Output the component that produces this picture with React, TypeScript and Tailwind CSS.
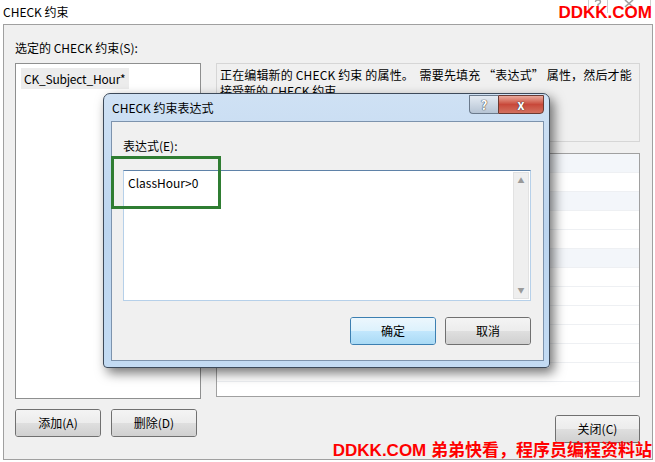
const font = "font-['Noto_Sans_CJK_SC','Noto_Sans',sans-serif]"

const rows = [true, false, true, false, false, true, false, false, false, false, false, false]

function WinButton({ label, focused, className }: { label: string; focused?: boolean; className?: string }) {
  return (
    <button
      className={`relative overflow-hidden rounded-[3px] border text-[12px] text-black ${
        focused ? 'border-[#3c7fb1]' : 'border-[#707070]'
      } ${className ?? ''}`}
    >
      <span className="absolute inset-0 flex flex-col">
        <span
          className={`flex-1 ${
            focused ? 'bg-gradient-to-b from-[#ecf7fd] to-[#dcf1fc]' : 'bg-gradient-to-b from-[#f4f4f4] to-[#ececec]'
          }`}
        />
        <span
          className={`flex-1 ${
            focused ? 'bg-gradient-to-b from-[#c2e7fd] to-[#a9daf5]' : 'bg-gradient-to-b from-[#dfdfdf] to-[#d0d0d0]'
          }`}
        />
      </span>
      <span className="relative">{label}</span>
    </button>
  )
}

export default function App() {
  return (
    <div className={`relative h-[462px] w-[655px] overflow-hidden bg-white text-black ${font}`}>
      {/* window title */}
      <div className="flex h-[24px] items-center pl-[3px] text-[12px] leading-none">CHECK 约束</div>

      {/* faint caption buttons behind watermark */}
      <div className="absolute right-[4px] top-[-6px] flex h-[19px]">
        <div className="flex w-[20px] items-center justify-center border-x border-[#cfcfcf]">
          <svg width="8" height="10" viewBox="0 0 8 10">
            <path d="M1.5 3 Q1.5 1 4 1 Q6.5 1 6.5 3 Q6.5 4.5 4 5.5 L4 7 M4 8.5 L4 9.5" stroke="#a0a0a0" strokeWidth="1.4" fill="none" />
          </svg>
        </div>
        <div className="flex w-[43px] items-center justify-center border-r border-[#cfcfcf]">
          <svg width="10" height="9" viewBox="0 0 10 9">
            <path d="M1 1 L9 8 M9 1 L1 8" stroke="#a0a0a0" strokeWidth="1.6" />
          </svg>
        </div>
      </div>
      <div className="absolute right-[3px] top-[3px] font-['Liberation_Sans','Noto_Sans_CJK_SC',sans-serif] text-[17px] font-bold leading-[20px] text-[#ff0000]">
        DDKK.COM
      </div>

      {/* main panel */}
      <div className="ml-[3px] h-[436px] w-[650px] border border-[#a0a0a0] bg-[#f0f0f0] pl-[11px] pr-[12px] pt-[15px]">
        <div className="h-[16px] text-[12px] leading-[16px]">选定的 CHECK 约束(S):</div>
        <div className="mt-[7px] flex gap-[15px]">
          <div className="flex w-[186px] flex-col">
            <div className="h-[336px] border border-[#8e8f8f] bg-white p-[1px]">
              <div className="ml-[4px] inline-block bg-[#ececec] px-[3px] text-[12px] leading-[21px] tracking-[-0.2px]">
                CK_Subject_Hour*
              </div>
            </div>
            <div className="mt-[10px] flex gap-[10px]">
              <WinButton label="添加(A)" className="h-[28px] w-[86px]" />
              <WinButton label="删除(D)" className="h-[28px] w-[86px]" />
            </div>
          </div>

          <div className="flex flex-1 flex-col">
            <div className="h-[79px] border border-[#d6d6d6] bg-[#f0f0f0] px-[3px] pt-[3px] text-[12px] leading-[16px]">
              <div className="whitespace-pre tracking-[0.15px]">正在编辑新的 CHECK 约束 的属性。  需要先填充 “表达式” 属性，然后才能</div>
              <div className="whitespace-nowrap">接受新的 CHECK 约束。</div>
            </div>
            <div className="mt-[11px] h-[244px] border border-[#a0a0a0] bg-white">
              {rows.map((s, i) => (
                <div
                  key={i}
                  className={`h-[19px] border-b border-[#eef0f3] ${s ? 'bg-[#f3f6fa]' : 'bg-white'}`}
                />
              ))}
            </div>
            <div className="mt-[18px] flex justify-end">
              <WinButton label="关闭(C)" className="h-[28px] w-[85px]" />
            </div>
          </div>
        </div>
      </div>

      {/* expression dialog */}
      <div className="absolute left-[103px] top-[93px] flex h-[275px] w-[447px] flex-col rounded-t-[7px] rounded-b-[4px] border border-[#3d4a5a] bg-gradient-to-b from-[#cfe1f4] via-[#bcd5ef] to-[#c3dbf3] pb-[6px] pl-[7px] pr-[5px] shadow-[4px_5px_12px_rgba(0,0,0,0.55)]">
        <div className="relative flex h-[27px] items-center pl-[1px] text-[12px]">
          CHECK 约束表达式
          <div className="absolute right-[0px] top-[1px] flex h-[19px]">
            <div className="flex w-[29px] items-center justify-center rounded-bl-[4px] border border-r-0 border-[#6b7a8c] bg-gradient-to-b from-[#e4ebf3] to-[#b6c4d4] text-[13px] font-bold leading-none text-white [text-shadow:0_0_1px_#333,0_0_1px_#333]">
              ?
            </div>
            <div className="flex w-[46px] items-center justify-center rounded-br-[4px] border border-[#6b3a32] bg-gradient-to-b from-[#e9a99c] via-[#c8483a] to-[#d2705f] text-[13px] font-bold leading-none text-white [text-shadow:0_0_1px_#333,0_0_1px_#333]">
              x
            </div>
          </div>
        </div>
        <div className="flex flex-1 flex-col border border-[#7d93ad] bg-[#f0f0f0] pl-[11px] pr-[12px] pt-[16px]">
          <div className="h-[16px] text-[12px] leading-[16px]">表达式(E):</div>
          <div className="mt-[16px] flex h-[131px] border border-[#b6d0e9] border-t-[#5f82a8] bg-white">
            <div className="flex-1 pl-[4px] pt-[3px] text-[12px] leading-[18px]">ClassHour&gt;0</div>
            <div className="m-[1px] flex w-[16px] flex-col items-center justify-between border border-[#e2e2e2] bg-[#efefef] py-[4px] text-[7px] leading-none text-[#9a9a9a]">
              <span>▲</span>
              <span>▼</span>
            </div>
          </div>
          <div className="mt-[16px] flex justify-end gap-[9px]">
            <WinButton label="确定" focused className="h-[28px] w-[86px]" />
            <WinButton label="取消" className="h-[28px] w-[86px]" />
          </div>
        </div>
      </div>

      {/* green highlight */}
      <div className="absolute left-[111px] top-[156px] h-[53px] w-[110px] border-[3px] border-[#2f7d32]" />

      {/* watermark */}
      <div className="absolute bottom-[1px] right-[3px] whitespace-nowrap font-['Liberation_Sans','Noto_Sans_CJK_SC',sans-serif] text-[17px] font-bold leading-[20px] text-[#ff0000]">
        DDKK.COM 弟弟快看，程序员编程资料站
      </div>
    </div>
  )
}
